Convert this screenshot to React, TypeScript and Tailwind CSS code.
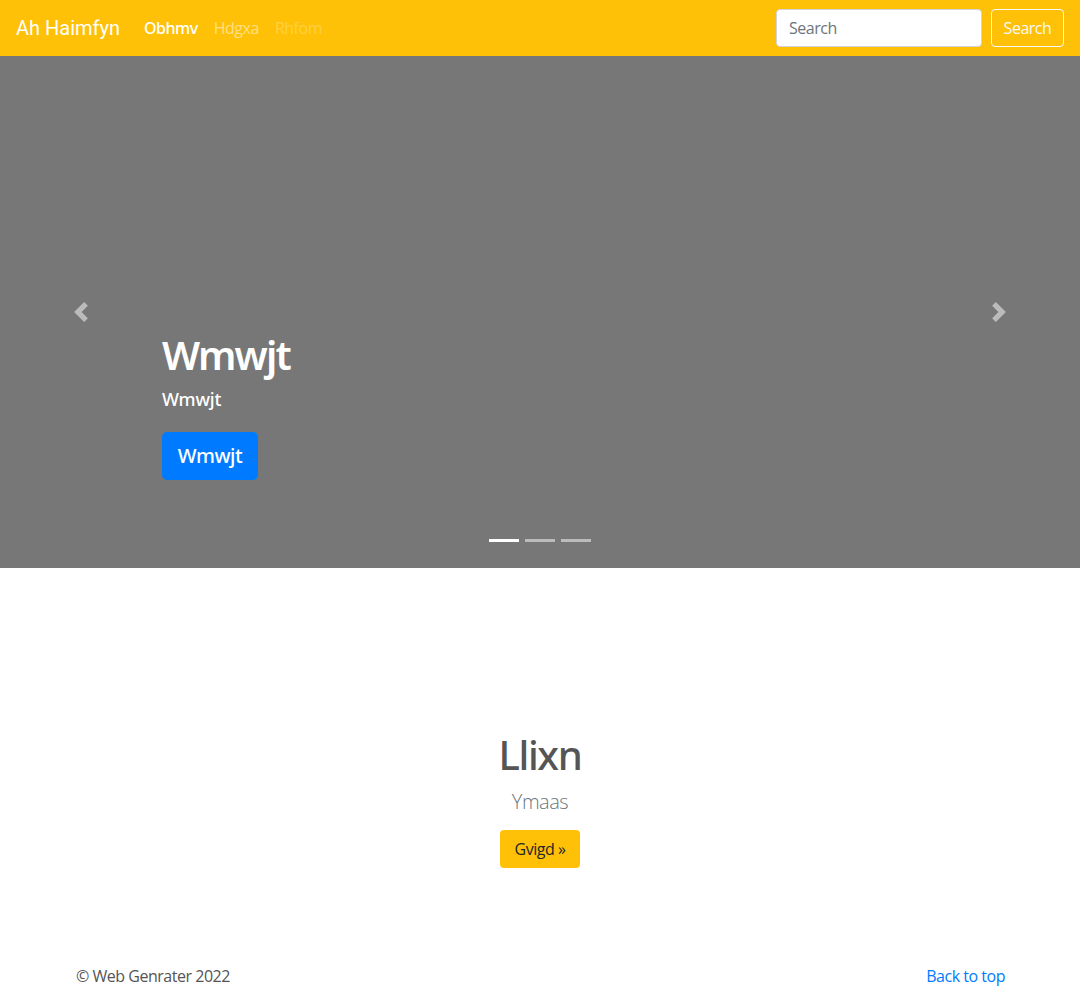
import React from "react";

const SANS = "font-['Open_Sans',_'Noto_Sans',_sans-serif] tracking-[-0.03em]";
const HEAD = "font-['Noto_Sans',_'Open_Sans',_sans-serif]";

function Chevron({ dir }: { dir: "prev" | "next" }) {
  const d =
    dir === "prev"
      ? "M5.25 0l-4 4 4 4 1.5-1.5L4.25 4l2.5-2.5L5.25 0z"
      : "M2.75 0l-1.5 1.5L3.75 4l-2.5 2.5L2.75 8l4-4-4-4z";
  return (
    <svg width="20" height="20" viewBox="0 0 8 8" fill="#fff" aria-hidden>
      <path d={d} />
    </svg>
  );
}

function Navbar() {
  return (
    <nav className="h-14 bg-[#ffc107] flex items-center px-4">
      <a className="font-['Roboto',_sans-serif] tracking-normal text-[20px] text-white mr-4 leading-[30px]">
        Ah Haimfyn
      </a>
      <ul className="flex items-center text-[16px]">
        <li className={`${HEAD} px-2 text-white font-medium`}>Obhmv</li>
        <li className="px-2 text-white/50">Hdgxa</li>
        <li className="px-2 text-white/25">Rhfom</li>
      </ul>
      <form className="ml-auto flex items-center gap-[9px]">
        <input
          className="w-[206px] h-[38px] rounded border border-[#ced4da] bg-white px-3 text-[16px] text-[#495057] placeholder:text-[#6c757d] outline-none"
          placeholder="Search"
        />
        <button
          type="button"
          className="w-[73px] h-[38px] rounded border border-[#f8f9fa] text-[#f8f9fa] text-[16px]"
        >
          Search
        </button>
      </form>
    </nav>
  );
}

function Carousel() {
  return (
    <div className="relative h-[512px] bg-[#777] flex flex-col justify-end">
      <div className="px-[15%] pb-[88px] text-white">
        <h1 className={`${HEAD} text-[40px] leading-[48px] font-semibold tracking-[-0.045em] mb-2`}>Wmwjt</h1>
        <p className={`${HEAD} text-[18px] leading-6 font-medium tracking-[-0.01em] mb-[21px]`}>Wmwjt</p>
        <button
          type="button"
          className={`${HEAD} w-[96px] h-12 rounded-[5px] bg-[#007bff] text-white text-[20px] font-medium`}
        >
          Wmwjt
        </button>
      </div>

      <div className="absolute inset-y-0 left-0 w-[15%] flex items-center justify-center opacity-50">
        <Chevron dir="prev" />
      </div>
      <div className="absolute inset-y-0 right-0 w-[15%] flex items-center justify-center opacity-50">
        <Chevron dir="next" />
      </div>

      <div className="absolute bottom-[26px] left-0 right-0 flex justify-center gap-[6px]">
        <span className="w-[30px] h-[3px] bg-white" />
        <span className="w-[30px] h-[3px] bg-white/50" />
        <span className="w-[30px] h-[3px] bg-white/50" />
      </div>
    </div>
  );
}

export default function App() {
  return (
    <div className={`${SANS} bg-white min-h-screen`}>
      <Navbar />
      <Carousel />

      <section className="pt-[163px] text-center">
        <h1 className={`${HEAD} text-[40px] leading-[48px] font-medium tracking-[-0.035em] text-[#555] mb-2`}>
          Llixn
        </h1>
        <p className="text-[20px] leading-[30px] font-light text-[#6c757d] mb-[13px]">Ymaas</p>
        <button
          type="button"
          className="w-[80px] h-[38px] rounded bg-[#ffc107] text-[#212529] text-[16px]"
        >
          Gvigd »
        </button>
      </section>

      <footer className="mx-auto w-[960px] px-3 pt-[96px] pb-12 flex justify-between text-[16px] leading-6">
        <p className="text-[#555] pl-1">© Web Genrater 2022</p>
        <a className="text-[#007bff] pr-[3px]">Back to top</a>
      </footer>
    </div>
  );
}
